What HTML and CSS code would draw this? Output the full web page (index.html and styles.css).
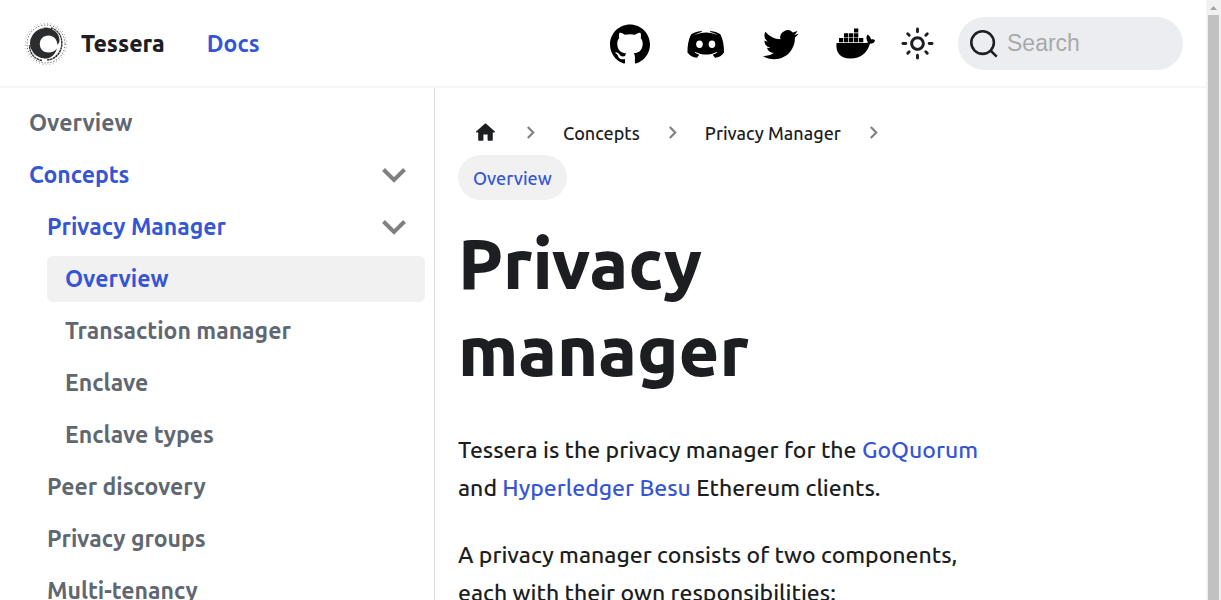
FILE: index.html
```html
<!DOCTYPE html>
<html lang="en">
<head>
<meta charset="utf-8">
<title>Privacy manager | Tessera</title>
<link rel="stylesheet" href="styles.css">
</head>
<body>
<div class="page">
  <header class="navbar">
    <a class="brand" href="#">
      <svg class="brand-logo" viewBox="0 0 44 44" aria-hidden="true">
        <g fill="none" stroke="#2b2c2e">
          <circle cx="22" cy="22" r="20.7" stroke-width=".8" stroke-dasharray="1 2.500" opacity=".5"/>
          <circle cx="22" cy="22" r="19" stroke-width="1" stroke-dasharray="1.200 1.800" opacity=".8"/>
          <path stroke-width="1.500" stroke-dasharray="2.500 .5" d="M27 6C34 8 38 14 37.800 22C37.500 31 31 37.500 23 38"/>
          <path stroke-width="1.300" stroke-dasharray="2.500 .5" d="M18 38.500C10 37 5.500 31 5.500 23"/>
        </g>
        <path fill="#2b2c2e" d="M33.500 23C33 17 29.500 13.500 24.500 13.500C19.500 13.500 15.800 17 15.800 22C15.800 27 19.500 30.500 24.500 30.500C28 30.500 31 29 33 26.500C31 33.500 26 37 20 36.500C11.500 35.500 6 29.500 6 21.500C6 12.500 13 5.500 22 5.500C30 6 35.500 11.500 35.500 18C35.500 20 34.800 21.500 33.500 23Z"/>
        <path fill="none" stroke="#fff" stroke-width=".6" d="M6.500 16.500C9 10 14 6.500 20 6M7 27C9.500 33 14.500 36.500 20 37M28 7C33.500 9.500 36.500 14 36.500 19"/>
      </svg>
      <span>Tessera</span>
    </a>
    <a class="nav-link" href="#">Docs</a>
    <div class="nav-end">
      <a class="social" href="#" aria-label="GitHub">
        <svg class="icon-social" viewBox="0 0 24 24" aria-hidden="true"><path d="M12 .297c-6.630 0-12 5.373-12 12 0 5.303 3.438 9.800 8.205 11.385.6.113.82-.258.82-.577 0-.285-.01-1.040-.015-2.040-3.338.724-4.042-1.610-4.042-1.610C4.422 18.070 3.633 17.700 3.633 17.700c-1.087-.744.084-.729.084-.729 1.205.084 1.838 1.236 1.838 1.236 1.070 1.835 2.809 1.305 3.495.998.108-.776.417-1.305.76-1.605-2.665-.3-5.466-1.332-5.466-5.930 0-1.310.465-2.380 1.235-3.220-.135-.303-.54-1.523.105-3.176 0 0 1.005-.322 3.300 1.230.96-.267 1.980-.399 3-.405 1.020.006 2.040.138 3 .405 2.280-1.552 3.285-1.230 3.285-1.230.645 1.653.24 2.873.12 3.176.765.84 1.230 1.910 1.230 3.220 0 4.610-2.805 5.625-5.475 5.920.42.36.81 1.096.81 2.220 0 1.606-.015 2.896-.015 3.286 0 .315.21.69.825.57C20.565 22.092 24 17.592 24 12.297c0-6.627-5.373-12-12-12"/></svg>
      </a>
      <a class="social" href="#" aria-label="Discord">
        <svg class="icon-social" viewBox="-1 0 40 40" aria-hidden="true"><path d="M15.500 7C11 7.300 7.500 8.700 5 10.500C2.500 15.500 1.300 22 1.500 28.500C3.500 31.500 7 33.500 11 33.800L13.300 30.800C11.500 30.200 10 29.400 8.700 28.400L9.300 27.900C16 31.300 24 31.300 30.700 27.900L31.300 28.400C30 29.400 28.500 30.200 26.700 30.800L29 33.800C33 33.500 36 31.500 38 28.500C38.200 22 37 15.500 34.500 10.500C32.500 8.700 29 7.300 24.500 7L24 8C27 8.500 29.500 9.500 31.500 11C24 7.500 16 7.500 8.500 11C10.500 9.500 13 8.500 16 8Z"/><ellipse cx="13.500" cy="20.300" rx="3.300" ry="3.700" fill="#fff"/><ellipse cx="26" cy="20.300" rx="3.300" ry="3.700" fill="#fff"/></svg>
      </a>
      <a class="social" href="#" aria-label="Twitter">
        <svg class="icon-social" viewBox="-2 -2 27 27" aria-hidden="true"><path d="M23.953 4.570a10 10 0 01-2.825.775 4.958 4.958 0 002.163-2.723c-.951.555-2.005.959-3.127 1.184a4.920 4.920 0 00-8.384 4.482C7.690 8.095 4.067 6.130 1.640 3.162a4.822 4.822 0 00-.666 2.475c0 1.710.87 3.213 2.188 4.096a4.904 4.904 0 01-2.228-.616v.06a4.923 4.923 0 003.946 4.827 4.996 4.996 0 01-2.212.085 4.936 4.936 0 004.604 3.417 9.867 9.867 0 01-6.102 2.105c-.39 0-.779-.023-1.170-.067a13.995 13.995 0 007.557 2.209c9.053 0 13.998-7.496 13.998-13.985 0-.21 0-.42-.015-.63A9.935 9.935 0 0024 4.590z"/></svg>
      </a>
      <a class="social" href="#" aria-label="Docker">
        <svg class="icon-social" viewBox="-1 0 40 40" aria-hidden="true"><path d="M.5 19H29.500C30.500 19 31.500 18.700 32 18.300C30 15.500 30 12.500 31.500 10.500C33.500 11.700 34.700 13.500 35 15.500C36.500 15 38.500 15.500 39 16.500C38.500 18.800 36.500 19.800 34 19.800C31 29 25 34.500 14.500 34.500C4.500 34.500-.5 29 .5 19Z"/><path d="M3 14h4.300v4.200H3zM8 14h4.300v4.200H8zM13 14h4.300v4.200H13zM18 14h4.300v4.200H18zM23 14h4.300v4.200H23zM8 9.200h4.300v4.200H8zM13 9.200h4.300v4.200H13zM18 9.200h4.300v4.200H18zM18 4.500h4.300v4.100H18z"/></svg>
      </a>
      <button class="theme-toggle" type="button" aria-label="Switch between dark and light mode">
        <svg class="icon-sun" viewBox="0 0 24 24" aria-hidden="true"><path d="M12,9c1.650,0,3,1.350,3,3s-1.350,3-3,3s-3-1.350-3-3S10.350,9,12,9 M12,7c-2.760,0-5,2.240-5,5s2.240,5,5,5s5-2.240,5-5 S14.760,7,12,7L12,7z M2,13l2,0c0.550,0,1-0.450,1-1s-0.450-1-1-1l-2,0c-0.550,0-1,0.450-1,1S1.450,13,2,13z M20,13l2,0c0.550,0,1-0.450,1-1 s-0.450-1-1-1l-2,0c-0.550,0-1,0.450-1,1S19.450,13,20,13z M11,2v2c0,0.550,0.450,1,1,1s1-0.450,1-1V2c0-0.550-0.450-1-1-1S11,1.450,11,2z M11,20v2c0,0.550,0.450,1,1,1s1-0.450,1-1v-2c0-0.550-0.450-1-1-1C11.450,19,11,19.450,11,20z"/><path d="M5.300 5.300L6.300 6.300M17.700 17.700L18.700 18.700M5.300 18.700L6.300 17.700M17.700 6.300L18.700 5.300" fill="none" stroke="currentColor" stroke-width="2" stroke-linecap="round"/></svg>
      </button>
      <label class="search">
        <svg class="icon-search" viewBox="0 0 20 20" aria-hidden="true"><path d="M14.386 14.386l4.088 4.088-4.088-4.088c-2.942 2.942-7.711 2.942-10.653 0s-2.942-7.711 0-10.653 7.711-2.942 10.653 0 2.942 7.711 0 10.653z"/></svg>
        <input class="search-input" type="search" placeholder="Search" aria-label="Search">
      </label>
    </div>
  </header>

  <div class="layout">
    <nav class="sidebar" aria-label="Docs sidebar">
      <ul class="menu">
        <li><a class="menu-link" href="#">Overview</a></li>
        <li>
          <a class="menu-link is-open" href="#">Concepts
            <svg class="caret" viewBox="0 0 24 24" aria-hidden="true"><path d="M1.500 6.500L12 17L22.500 6.500"/></svg></a>
          <ul class="menu">
            <li>
              <a class="menu-link is-open" href="#">Privacy Manager
                <svg class="caret" viewBox="0 0 24 24" aria-hidden="true"><path d="M1.500 6.500L12 17L22.500 6.500"/></svg></a>
              <ul class="menu">
                <li><a class="menu-link is-active" href="#" aria-current="page">Overview</a></li>
                <li><a class="menu-link" href="#">Transaction manager</a></li>
                <li><a class="menu-link" href="#">Enclave</a></li>
                <li><a class="menu-link" href="#">Enclave types</a></li>
              </ul>
            </li>
            <li><a class="menu-link" href="#">Peer discovery</a></li>
            <li><a class="menu-link" href="#">Privacy groups</a></li>
            <li><a class="menu-link" href="#">Multi-tenancy</a></li>
          </ul>
        </li>
      </ul>
    </nav>

    <main class="main">
      <article class="article">
        <nav aria-label="Breadcrumbs">
          <ul class="crumbs">
            <li class="crumb"><a class="crumb-link" href="#" aria-label="Home page"><svg class="icon-home" viewBox="0 0 24 24" aria-hidden="true"><path d="M10 19v-5h4v5c0 .55.45 1 1 1h3c.55 0 1-.45 1-1v-7h1.700c.46 0 .68-.57.33-.87L12.670 3.600c-.38-.34-.96-.34-1.340 0l-8.360 7.530c-.34.3-.13.87.33.87H5v7c0 .55.45 1 1 1h3c.55 0 1-.45 1-1z"/></svg></a><svg class="crumb-sep" viewBox="0 0 12 12" aria-hidden="true"><path d="M3.500 1L8.500 6L3.500 11"/></svg></li>
            <li class="crumb"><a class="crumb-link" href="#">Concepts</a><svg class="crumb-sep" viewBox="0 0 12 12" aria-hidden="true"><path d="M3.500 1L8.500 6L3.500 11"/></svg></li>
            <li class="crumb"><a class="crumb-link" href="#">Privacy Manager</a><svg class="crumb-sep" viewBox="0 0 12 12" aria-hidden="true"><path d="M3.500 1L8.500 6L3.500 11"/></svg></li>
            <li class="crumb"><span class="crumb-link is-current">Overview</span></li>
          </ul>
        </nav>
        <h1 class="title">Privacy manager</h1>
        <p class="text">Tessera is the privacy manager for the <a class="link" href="#">GoQuorum</a> and <a class="link" href="#">Hyperledger Besu</a> Ethereum clients.</p>
        <p class="text">A privacy manager consists of two components, each with their own responsibilities:</p>
      </article>
    </main>
  </div>
</div>
<div class="scrollbar" aria-hidden="true">
  <svg class="scroll-arrow" viewBox="0 0 15 15"><path d="M4 10h7L7.500 6z"/></svg>
  <div class="scroll-thumb"></div>
</div>
</body>
</html>
```

FILE: styles.css
```css
:root {
  --primary: #3655d5;
  --ink: #1c1e21;
  --muted: #606770;
  --hover: #f1f1f1;
}

* {
  box-sizing: border-box;
}

body {
  margin: 0;
  display: flex;
  height: 100vh;
  overflow: hidden;
  background: #fff;
  color: var(--ink);
  font-family: Ubuntu, "Noto Sans", sans-serif;
  font-size: 23px;
  font-weight: 500;
  line-height: 38px;
}

a {
  color: inherit;
  text-decoration: none;
}

ul {
  list-style: none;
  margin: 0;
  padding: 0;
}

svg {
  display: block;
  flex: none;
  fill: currentColor;
}

.page {
  flex: 1;
  min-width: 0;
  display: flex;
  flex-direction: column;
}

.navbar {
  flex: none;
  display: flex;
  align-items: center;
  padding: 17px 23px 16px 24px;
  border-bottom: 2px solid #f5f5f6;
}

.brand {
  display: flex;
  align-items: center;
  gap: 13px;
  font-weight: 800;
}

.brand-logo {
  width: 44px;
  height: 44px;
}

.nav-link {
  margin-left: 42px;
  color: var(--primary);
  font-weight: 600;
}

.nav-end {
  display: flex;
  align-items: center;
  margin-left: auto;
}

.social {
  margin-right: 35px;
  color: #000;
}

.social:nth-of-type(4) {
  margin-right: 16px;
}

.icon-social {
  width: 40px;
  height: 40px;
}

.theme-toggle {
  display: grid;
  place-items: center;
  width: 52px;
  height: 52px;
  margin-right: 15px;
  padding: 0;
  border: 0;
  background: none;
  color: var(--ink);
}

.icon-sun {
  width: 35px;
  height: 35px;
}

.search {
  display: flex;
  align-items: center;
  gap: 8px;
  width: 225px;
  height: 53px;
  padding: 0 11px;
  border-radius: 27px;
  background: #ebedf0;
}

.icon-search {
  width: 30px;
  height: 30px;
  fill: none;
  stroke: var(--ink);
  stroke-width: 1.7;
  stroke-linecap: round;
}

.search-input {
  flex: 1;
  min-width: 0;
  padding: 0;
  border: 0;
  outline: 0;
  background: none;
  font: 23px "Liberation Sans", sans-serif;
}

.search-input::placeholder {
  color: #a9a9a9;
}

.layout {
  flex: 1;
  min-height: 0;
  display: flex;
}

.sidebar {
  flex: 0 0 435px;
  padding: 12px 9px 0 11px;
  border-right: 1px solid #dadde1;
  overflow: hidden;
}

.menu {
  display: flex;
  flex-direction: column;
  gap: 6px;
}

.menu .menu {
  margin-top: 6px;
  padding-left: 18px;
}

.menu-link {
  display: flex;
  align-items: center;
  justify-content: space-between;
  height: 46px;
  padding: 0 19px 0 18px;
  border-radius: 6px;
  color: var(--muted);
  font-weight: 600;
}

.is-open,
.is-active {
  color: var(--primary);
}

.is-active {
  background: var(--hover);
}

.caret {
  width: 24px;
  height: 24px;
  fill: none;
  stroke: #808080;
  stroke-width: 4;
}

.main {
  flex: 1;
  min-width: 0;
  overflow: hidden;
}

.article {
  width: 75%;
  padding: 22px 24px 22px 23px;
}

.crumbs {
  display: flex;
  flex-wrap: wrap;
}

.crumb {
  display: flex;
  align-items: center;
  height: 45px;
}

.crumb-link {
  display: flex;
  align-items: center;
  height: 45px;
  padding: 0 15px;
  border-radius: 23px;
  font-size: 18px;
}

.is-current {
  background: var(--hover);
  color: var(--primary);
}

.icon-home {
  width: 25px;
  height: 25px;
}

.crumb-sep {
  width: 13px;
  height: 13px;
  margin: 0 11px;
  fill: none;
  stroke: #808080;
  stroke-width: 2;
}

.title {
  margin: 20px 0 37px;
  font-size: 70px;
  font-weight: 800;
  line-height: 87px;
}

.text {
  margin: 0 0 29px;
}

.link {
  color: var(--primary);
}

.scrollbar {
  flex: none;
  width: 15px;
  background: #f1f1f1;
}

.scroll-arrow {
  width: 15px;
  height: 15px;
  fill: #a3a3a3;
}

.scroll-thumb {
  height: 100%;
  margin: 0 2px;
  background: #c1c1c1;
}
```
